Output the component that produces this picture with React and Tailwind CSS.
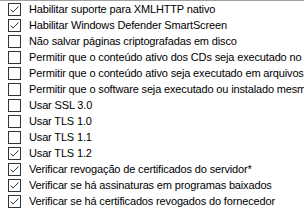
import React from 'react';

const items = [
    { label: "Habilitar suporte para XMLHTTP nativo", checked: true },
    { label: "Habilitar Windows Defender SmartScreen", checked: true },
    { label: "Não salvar páginas criptografadas em disco", checked: false },
    { label: "Permitir que o conteúdo ativo dos CDs seja executado no computador", checked: false },
    { label: "Permitir que o conteúdo ativo seja executado em arquivos do computador", checked: false },
    { label: "Permitir que o software seja executado ou instalado mesmo se a assinatura for inválida", checked: false },
    { label: "Usar SSL 3.0", checked: false },
    { label: "Usar TLS 1.0", checked: false },
    { label: "Usar TLS 1.1", checked: false },
    { label: "Usar TLS 1.2", checked: true },
    { label: "Verificar revogação de certificados do servidor*", checked: true },
    { label: "Verificar se há assinaturas em programas baixados", checked: true },
    { label: "Verificar se há certificados revogados do fornecedor", checked: true },
];

const CheckBox = ({ checked }) => (
    <div className="w-[13px] h-[13px] border border-[#333333] bg-white shrink-0 flex items-center justify-center">
        {checked && (
            <svg width="11" height="11" viewBox="0 0 11 11">
                <path d="M1.5 5.5 L4 8 L9.5 2.5" fill="none" stroke="#333333" strokeWidth="1" />
            </svg>
        )}
    </div>
);

export default function App() {
    return (
        <div className="w-[304px] h-[217px] bg-white border-t border-[#a0a0a0] overflow-hidden"
            style={{ fontFamily: '"Liberation Sans", Arial, sans-serif' }}>
            <div className="flex flex-col">
                {items.map((item, i) => (
                    <div key={i} className="h-[16px] flex items-center pl-[8px] gap-[8px]">
                        <CheckBox checked={item.checked} />
                        <span className="text-[11px] tracking-[-0.15px] text-black whitespace-nowrap leading-none">{item.label}</span>
                    </div>
                ))}
            </div>
        </div>
    );
}
